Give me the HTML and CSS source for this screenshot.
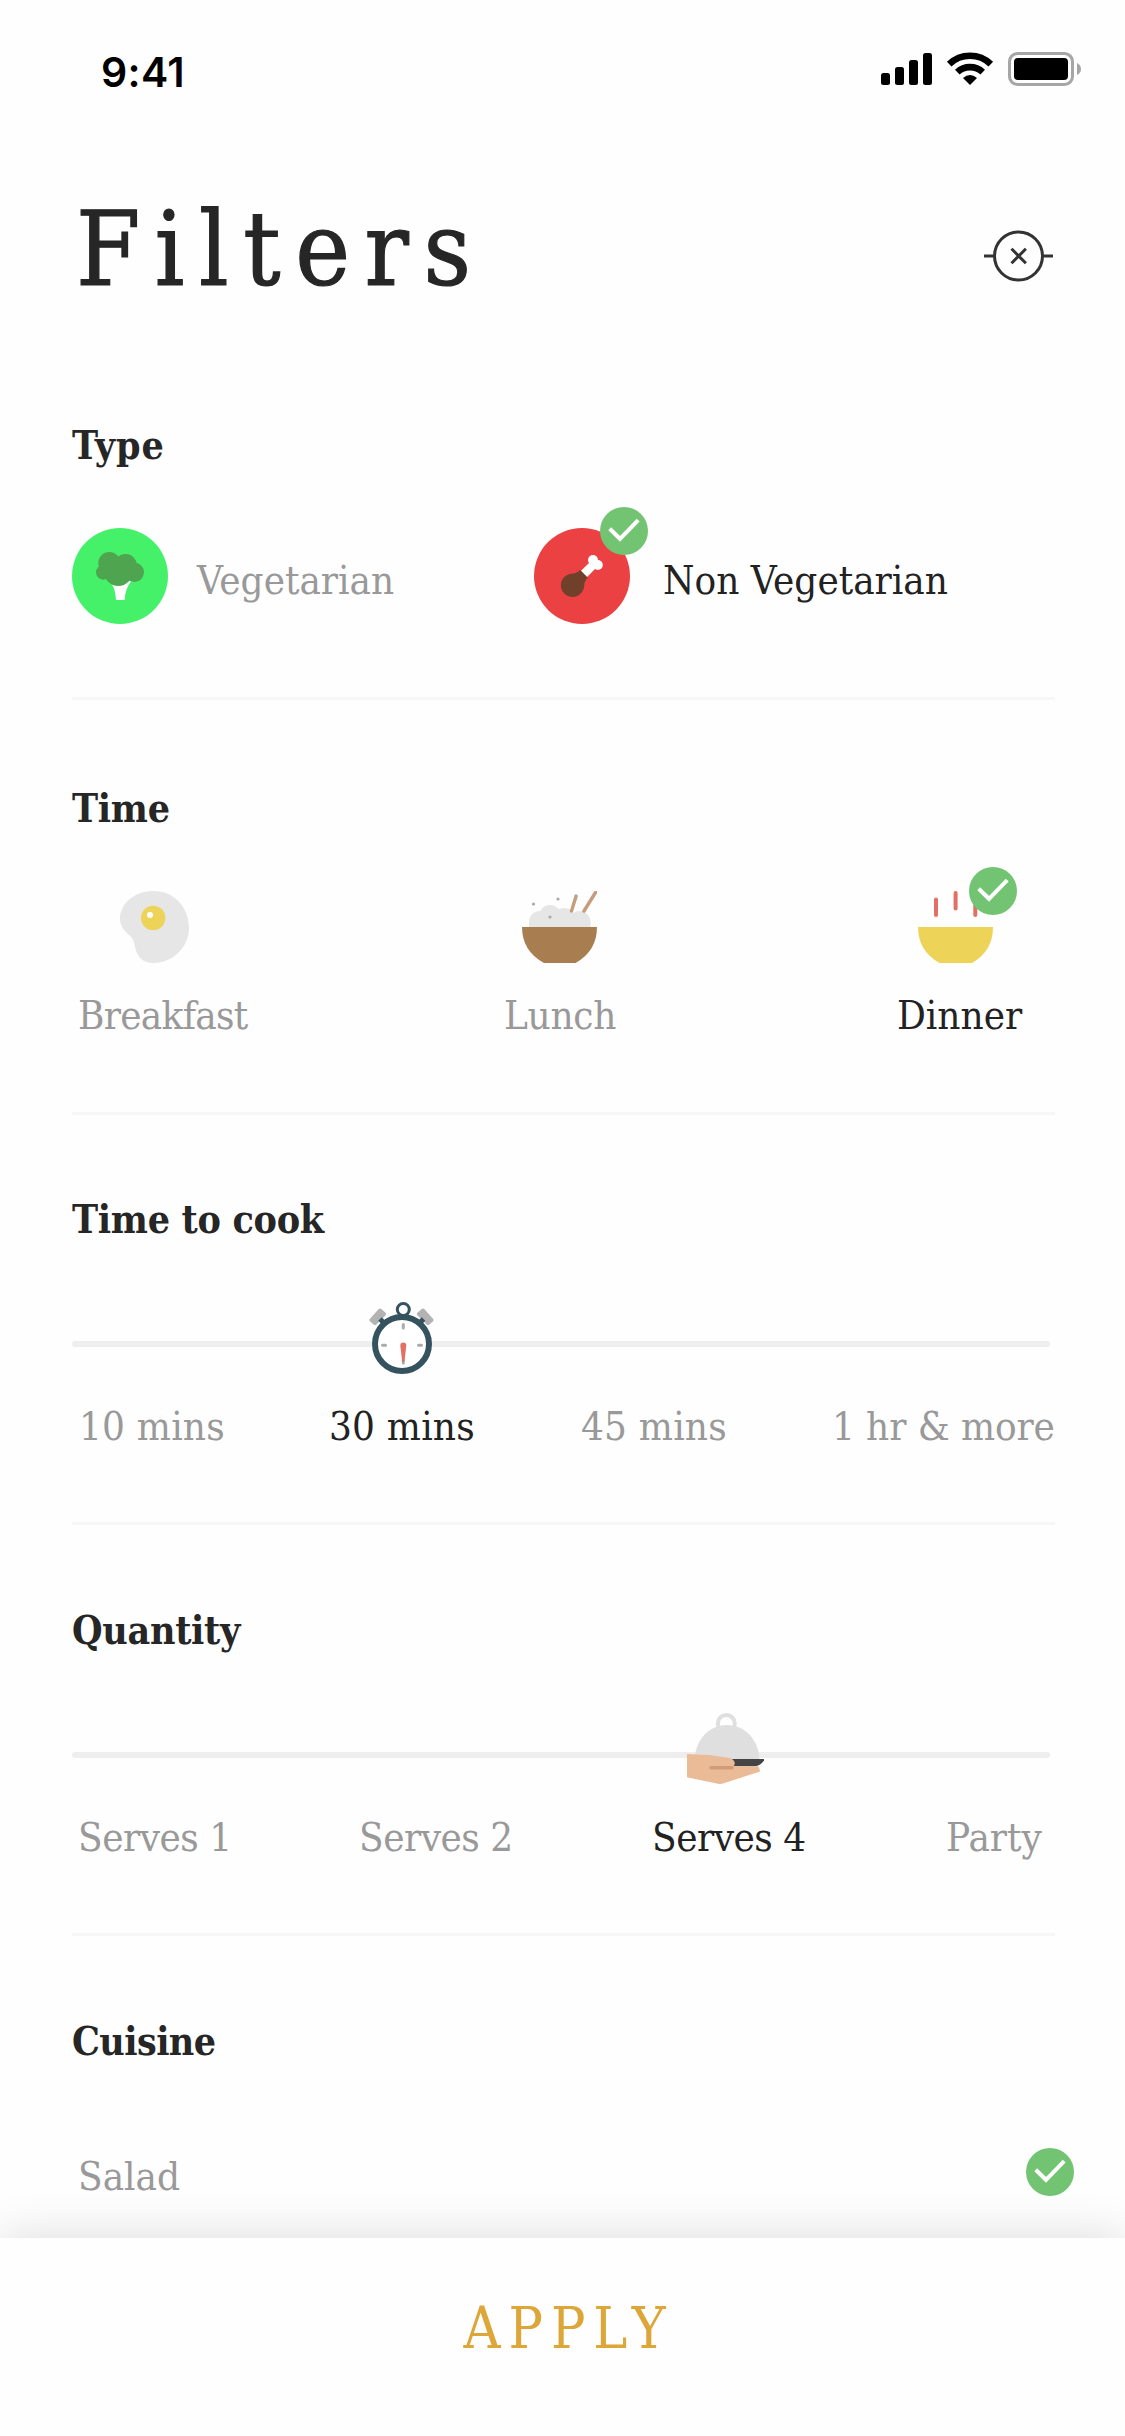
FILE: index.html
```html
<!DOCTYPE html>
<html lang="en">
<head>
<meta charset="utf-8">
<title>Filters</title>
<link rel="stylesheet" href="styles.css">
</head>
<body>
<svg class="defs" width="0" height="0">
  <symbol id="check" viewBox="0 0 48 48">
    <circle cx="24" cy="24" r="24" fill="#72c472"/>
    <path d="M9.7 21.7 20 31.8 38.2 13.2" fill="none" stroke="#fff" stroke-width="4"/>
  </symbol>
</svg>
<main class="screen">
  <div class="status">
    <span class="clock">9:41</span>
    <svg width="200" height="34" viewBox="0 0 200 34">
      <rect x="0" y="21" width="9" height="12" rx="2.5"/>
      <rect x="14" y="15" width="9" height="18" rx="2.5"/>
      <rect x="28" y="8" width="9" height="25" rx="2.5"/>
      <rect x="42" y="1" width="9" height="32" rx="2.5"/>
      <g fill="none" stroke="#000" stroke-width="6.6">
        <path d="M68.2 12.2a30 30 0 0 1 41.6 0"/>
        <path d="M76.3 20.2a18.5 18.5 0 0 1 25.4 0"/>
      </g>
      <path d="M82 26q7-6 14 0L89 33Z"/>
      <rect x="128.5" y="1.5" width="63" height="31" rx="8" fill="none" stroke="#a6a6a6" stroke-width="3"/>
      <rect x="133" y="6" width="54" height="22" rx="4"/>
      <path d="M196 11q4 2 4 6t-4 6Z" fill="#a6a6a6"/>
    </svg>
  </div>

  <header class="header">
    <h1>Filters</h1>
    <svg width="69" height="52" viewBox="0 0 69 52" fill="none" stroke="#333" stroke-width="3">
      <circle cx="34.5" cy="26" r="24"/>
      <path d="M0 26h10.5M58.5 26H69M27.500 18.800l14.400 14.400M41.900 18.800 27.500 33.200"/>
    </svg>
  </header>

  <section class="section type">
    <h2 class="type-title">Type</h2>
    <div class="types">
      <div class="choice">
        <svg width="96" height="96" viewBox="0 0 96 96">
          <circle cx="48" cy="48" r="48" fill="#45f168"/>
          <path d="M40 56.5Q43.5 62 44 72h8.7Q53 61 59 53.5L56 50Z" fill="#fff"/>
          <g fill="#4fa450">
            <circle cx="37.3" cy="35" r="11"/><circle cx="53.5" cy="37.2" r="11.2"/>
            <circle cx="62.3" cy="44.3" r="9.7"/><circle cx="31.3" cy="44.4" r="7.3"/>
            <circle cx="46.3" cy="43.7" r="14.3"/>
          </g>
        </svg>
        <span class="label">Vegetarian</span>
      </div>
      <div class="choice meat">
        <svg width="96" height="96" viewBox="0 0 96 96">
          <circle cx="48" cy="48" r="48" fill="#eb4143"/>
          <path d="M46.3 43.5 56 34l6 6-9.4 9.6Z" fill="#fff"/>
          <circle cx="59" cy="32" r="5" fill="#fff"/><circle cx="63.8" cy="37" r="5" fill="#fff"/>
          <circle cx="38.5" cy="57.3" r="11.6" fill="#70402b"/>
          <path d="M36 46Q42 46 46.3 42l7.6 7.8Q50 53 50.1 59L40 60Z" fill="#70402b"/>
        </svg>
        <svg class="badge" width="48" height="48"><use href="#check"/></svg>
        <span class="label on">Non Vegetarian</span>
      </div>
    </div>
  </section>

  <section class="section time">
    <h2>Time</h2>
    <div class="meals">
      <div class="meal breakfast">
        <svg width="70" height="72" viewBox="0 0 70 72">
          <path d="M33 0C56 0 69 18 69 37 69 57 52 72 33 72 22 72 17.500 65 15.500 58 14 50 13 47 8 43 3 38 0 34 0 28 0 12 15 0 33 0Z" fill="#e6e6e6"/>
          <circle cx="33.2" cy="27" r="12.2" fill="#edd358"/>
          <circle cx="30" cy="24" r="3" fill="#fff"/>
        </svg>
        <span class="label">Breakfast</span>
      </div>
      <div class="meal lunch">
        <svg width="75" height="72" viewBox="0 0 75 72">
          <g fill="#e6e6e6">
            <circle cx="18" cy="31" r="11"/><circle cx="28" cy="25" r="11"/>
            <circle cx="42" cy="28" r="11"/><circle cx="57.5" cy="31" r="11"/>
            <path d="M7 30h61.500v7H7Z"/>
          </g>
          <path d="M54 5.500 49.500 20M73.500 1.500 62 20" stroke="#c79c7d" stroke-width="3.400" stroke-linecap="round"/>
          <g fill="#aaa"><circle cx="11.500" cy="13" r="1.600"/><circle cx="36" cy="8" r="1.600"/><circle cx="28" cy="26" r="1.600"/><circle cx="54" cy="4.800" r="1.600"/></g>
          <path d="M0 36h75Q75 60 53.500 72h-31.500Q0 60 0 36Z" fill="#a87d50"/>
        </svg>
        <span class="label">Lunch</span>
      </div>
      <div class="meal dinner">
        <svg width="75" height="72" viewBox="0 0 75 72">
          <path d="M18 8.500V24M37.600 2V17.500M57.300 8.500V24" stroke="#e27165" stroke-width="4" stroke-linecap="round"/>
          <path d="M0 36h75Q75 60 54 72H21.500Q0 60 0 36Z" fill="#edd358"/>
        </svg>
        <svg class="badge" width="48" height="48"><use href="#check"/></svg>
        <span class="label on">Dinner</span>
      </div>
    </div>
  </section>

  <section class="section cook">
    <h2>Time to cook</h2>
    <div class="slider">
      <div class="track"></div>
      <svg class="thumb timer" width="65" height="72" viewBox="0 0 65 72">
        <path d="M2.500 18 11 8.500l4 3.500-9 9ZM50 12l4-3.500 8.500 9.500-3.500 3Z" fill="#b3b3b3" stroke="#b3b3b3" stroke-width="4" stroke-linejoin="round"/>
        <path d="m11 17 6 6M54.500 17l-6 6" stroke="#34535f" stroke-width="5"/>
        <circle cx="33" cy="42" r="27" fill="#fff" stroke="#34535f" stroke-width="6"/>
        <circle cx="34.300" cy="7.500" r="6" fill="#fff" stroke="#34535f" stroke-width="3"/>
        <path d="M34.300 22.500V26M34.300 58V61M13.500 43.300H16.500M49.500 43.300H52.500" stroke="#aaa" stroke-width="3" stroke-linecap="round"/>
        <path d="M31.300 43.500q0-3.100 3-3.100t3 3.100l-1.700 15q-1.300 3-2.600 0Z" fill="#e27165"/>
      </svg>
    </div>
    <div class="steps mins">
      <span class="label">10 mins</span>
      <span class="label on">30 mins</span>
      <span class="label">45 mins</span>
      <span class="label hour">1 hr &amp; more</span>
    </div>
  </section>

  <section class="section quantity">
    <h2>Quantity</h2>
    <div class="slider">
      <div class="track"></div>
      <svg class="thumb serving" width="77" height="72" viewBox="0 0 77 72">
        <circle cx="39.300" cy="10.500" r="8.500" fill="#fff" stroke="#dfdfdf" stroke-width="4"/>
        <path d="M7.700 47C8 27 22 12 40 12s32 15 32.300 35Z" fill="#dfdfdf"/>
        <path d="M45 46h32v1.500Q73 53 68 53.300H45Z" fill="#444346"/>
        <path d="M0 41 22 42 44 45.300Q50 49 46.500 53.300H71Q73 55 73 58.500L36 70.500Q34 71.300 31 70.700L0 64.300Z" fill="#ebba97"/>
        <path d="M24 54.800H45" stroke="#d09c78" stroke-width="3.500" stroke-linecap="round"/>
      </svg>
    </div>
    <div class="steps serves">
      <span class="label">Serves 1</span>
      <span class="label">Serves 2</span>
      <span class="label on">Serves 4</span>
      <span class="label party">Party</span>
    </div>
  </section>

  <section class="section cuisine">
    <h2>Cuisine</h2>
    <div class="cuisine-row">
      <span class="label">Salad</span>
      <svg width="48" height="48"><use href="#check"/></svg>
    </div>
  </section>
</main>
<footer class="footer"><button class="apply">APPLY</button></footer>
</body>
</html>
```
FILE: styles.css
```css
* { box-sizing: border-box; }
body {
  margin: 0;
  width: 1125px;
  height: 2436px;
  overflow: hidden;
  display: flex;
  flex-direction: column;
  background: #fefefe;
  color: #262626;
  font-family: "DejaVu Serif Condensed", "DejaVu Serif", serif;
  font-stretch: condensed;
}
svg { display: block; flex: none; }
.defs { position: absolute; }
h1, h2 { margin: 0; }

.screen { height: 2238px; padding: 0 69px 0 72px; }

.status {
  height: 190px;
  margin-right: -25px;
  padding: 52px 0 0 29px;
  display: flex;
  justify-content: space-between;
}
.clock {
  font: 600 41px/40px Inter, "Liberation Sans", sans-serif;
  letter-spacing: 0.3px;
  color: #000;
}

.header {
  height: 231px;
  padding: 0 3px 0 4px;
  display: flex;
  justify-content: space-between;
}
.header h1 {
  font-size: 103px;
  line-height: 119px;
  font-weight: 400;
  letter-spacing: 14.6px;
  -webkit-text-stroke: 1.2px;
}
.header svg { margin-top: 40px; }

.section {
  width: 983px;
  border-bottom: 3px solid #f7f7f7;
}
.section h2 {
  margin-bottom: 59px;
  font-size: 39px;
  line-height: 48px;
  font-weight: 700;
  letter-spacing: -0.3px;
}
.section .type-title { letter-spacing: 0.9px; }
.label {
  font-size: 40px;
  line-height: 48px;
  color: #999;
  white-space: nowrap;
}
.label.on { color: #222; }
.badge { position: absolute; }

.type { height: 279px; }
.types {
  display: grid;
  grid-template-columns: 462px auto;
}
.choice {
  position: relative;
  display: flex;
  gap: 29px;
}
.choice.meat { gap: 33px; }
.choice .label { margin-top: 28px; }
.choice .badge { left: 66px; top: -21px; }

.time { height: 415px; padding-top: 84px; }
.meals {
  display: grid;
  grid-template-columns: 426px 392px auto;
  padding-left: 6px;
}
.meal {
  position: relative;
  display: flex;
  flex-direction: column;
  gap: 28px;
}
.breakfast > svg { margin-left: 42px; }
.breakfast .label { letter-spacing: -0.7px; }
.lunch > svg { margin-left: 18px; }
.lunch .label { letter-spacing: -0.3px; }
.dinner > svg { margin-left: 22px; }
.dinner > .badge { left: 73px; top: -24px; margin: 0; }
.dinner .label { margin-left: 1px; }

.cook { height: 410px; padding-top: 80px; }
.quantity { height: 411px; padding-top: 81px; }
.slider {
  position: relative;
  height: 72px;
  padding-top: 39px;
  margin-bottom: 28px;
}
.track {
  width: 978px;
  height: 6px;
  border-radius: 3px;
  background: #eee;
}
.thumb { position: absolute; top: 0; }
.timer { left: 297px; }
.serving { left: 615px; }
.steps { display: grid; }
.mins {
  grid-template-columns: 250px 252px 251px auto;
  padding-left: 7px;
  letter-spacing: 0.2px;
}
.mins .hour { letter-spacing: -0.1px; }
.serves {
  grid-template-columns: 281px 293px 294px auto;
  padding-left: 6px;
  letter-spacing: -0.5px;
}
.serves .party { letter-spacing: 0; }

.cuisine { padding-top: 81px; border: 0; }
.cuisine-row {
  width: 1002px;
  margin-top: 83px;
  padding-left: 6px;
  display: flex;
  justify-content: space-between;
}
.cuisine h2 { margin-bottom: 0; letter-spacing: -0.6px; }
.cuisine .label { margin-top: 4px; }

.footer {
  position: relative;
  height: 198px;
  padding-top: 61px;
  display: flex;
  justify-content: center;
  align-items: flex-start;
  background: #fefefe;
  box-shadow: 0 0 45px rgba(0, 0, 0, 0.14);
}
.apply {
  border: 0;
  padding: 0 0 0 12px;
  background: none;
  color: #dca638;
  font: inherit;
  font-size: 57px;
  line-height: 59px;
  letter-spacing: 7.9px;
}
```
